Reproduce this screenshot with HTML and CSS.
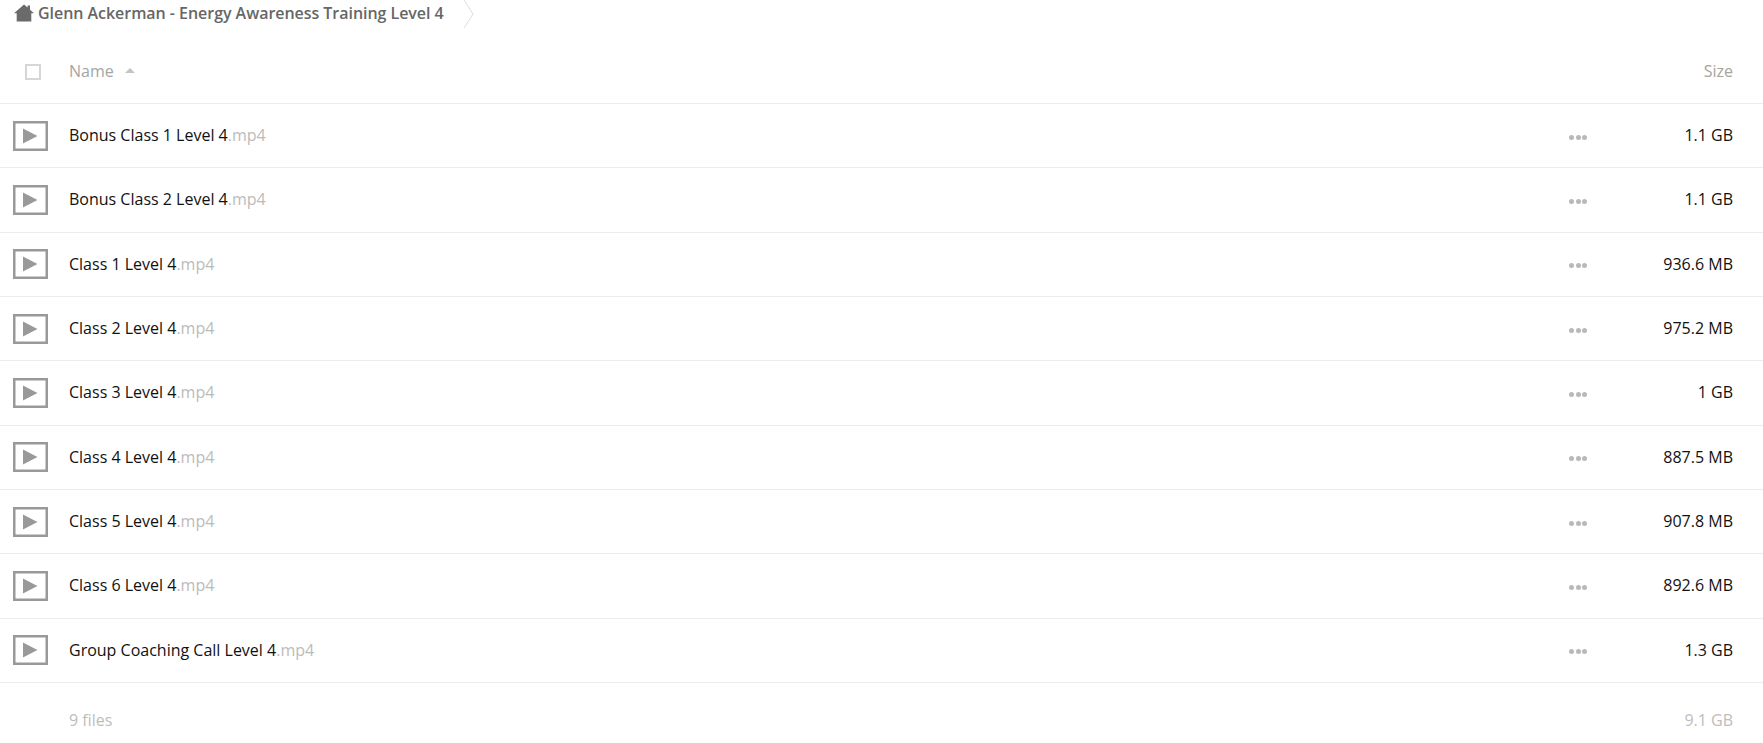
FILE: index.html
```html
<!DOCTYPE html>
<html lang="en">
<head>
<meta charset="utf-8">
<title>Glenn Ackerman - Energy Awareness Training Level 4</title>
<link rel="stylesheet" href="styles.css">
</head>
<body>
<nav class="crumb">
  <svg class="home" viewBox="0 0 20 18" width="20" height="18"><path d="M10 .5 13.6 3.6V1.5H16V5.700L20 9.200H17.300V17.500H2.700V9.200H0Z" fill="#6b6b6b"/></svg>
  <span class="crumb-text">Glenn Ackerman - Energy Awareness Training Level 4</span>
  <svg class="chev" viewBox="0 0 12 28" width="12" height="28"><path d="M1 0 10 14 1 28" fill="none" stroke="#dcdcdc"/></svg>
</nav>
<header class="head">
  <span class="check"></span>
  <span class="head-name">Name</span>
  <span class="sort"></span>
  <span class="head-size">Size</span>
</header>
<main>
  <div class="row"><svg class="vid" viewBox="0 0 35 30" width="35" height="30"><rect x="1.250" y="1.250" width="32.500" height="27.500" fill="none" stroke="#999" stroke-width="2.500"/><path d="M10 7.500 24.500 15 10 22.500Z" fill="#999"/></svg><span class="name">Bonus Class 1 Level 4<span class="ext">.mp4</span></span><span class="dots"><i></i><i></i><i></i></span><span class="size">1.1 GB</span></div>
  <div class="row"><svg class="vid" viewBox="0 0 35 30" width="35" height="30"><rect x="1.250" y="1.250" width="32.500" height="27.500" fill="none" stroke="#999" stroke-width="2.500"/><path d="M10 7.500 24.500 15 10 22.500Z" fill="#999"/></svg><span class="name">Bonus Class 2 Level 4<span class="ext">.mp4</span></span><span class="dots"><i></i><i></i><i></i></span><span class="size">1.1 GB</span></div>
  <div class="row"><svg class="vid" viewBox="0 0 35 30" width="35" height="30"><rect x="1.250" y="1.250" width="32.500" height="27.500" fill="none" stroke="#999" stroke-width="2.500"/><path d="M10 7.500 24.500 15 10 22.500Z" fill="#999"/></svg><span class="name">Class 1 Level 4<span class="ext">.mp4</span></span><span class="dots"><i></i><i></i><i></i></span><span class="size">936.6 MB</span></div>
  <div class="row"><svg class="vid" viewBox="0 0 35 30" width="35" height="30"><rect x="1.250" y="1.250" width="32.500" height="27.500" fill="none" stroke="#999" stroke-width="2.500"/><path d="M10 7.500 24.500 15 10 22.500Z" fill="#999"/></svg><span class="name">Class 2 Level 4<span class="ext">.mp4</span></span><span class="dots"><i></i><i></i><i></i></span><span class="size">975.2 MB</span></div>
  <div class="row"><svg class="vid" viewBox="0 0 35 30" width="35" height="30"><rect x="1.250" y="1.250" width="32.500" height="27.500" fill="none" stroke="#999" stroke-width="2.500"/><path d="M10 7.500 24.500 15 10 22.500Z" fill="#999"/></svg><span class="name">Class 3 Level 4<span class="ext">.mp4</span></span><span class="dots"><i></i><i></i><i></i></span><span class="size">1 GB</span></div>
  <div class="row"><svg class="vid" viewBox="0 0 35 30" width="35" height="30"><rect x="1.250" y="1.250" width="32.500" height="27.500" fill="none" stroke="#999" stroke-width="2.500"/><path d="M10 7.500 24.500 15 10 22.500Z" fill="#999"/></svg><span class="name">Class 4 Level 4<span class="ext">.mp4</span></span><span class="dots"><i></i><i></i><i></i></span><span class="size">887.5 MB</span></div>
  <div class="row"><svg class="vid" viewBox="0 0 35 30" width="35" height="30"><rect x="1.250" y="1.250" width="32.500" height="27.500" fill="none" stroke="#999" stroke-width="2.500"/><path d="M10 7.500 24.500 15 10 22.500Z" fill="#999"/></svg><span class="name">Class 5 Level 4<span class="ext">.mp4</span></span><span class="dots"><i></i><i></i><i></i></span><span class="size">907.8 MB</span></div>
  <div class="row"><svg class="vid" viewBox="0 0 35 30" width="35" height="30"><rect x="1.250" y="1.250" width="32.500" height="27.500" fill="none" stroke="#999" stroke-width="2.500"/><path d="M10 7.500 24.500 15 10 22.500Z" fill="#999"/></svg><span class="name">Class 6 Level 4<span class="ext">.mp4</span></span><span class="dots"><i></i><i></i><i></i></span><span class="size">892.6 MB</span></div>
  <div class="row"><svg class="vid" viewBox="0 0 35 30" width="35" height="30"><rect x="1.250" y="1.250" width="32.500" height="27.500" fill="none" stroke="#999" stroke-width="2.500"/><path d="M10 7.500 24.500 15 10 22.500Z" fill="#999"/></svg><span class="name">Group Coaching Call Level 4<span class="ext">.mp4</span></span><span class="dots"><i></i><i></i><i></i></span><span class="size">1.3 GB</span></div>
</main>
<footer class="foot">
  <span class="foot-count">9 files</span>
  <span class="foot-size">9.1 GB</span>
</footer>
</body>
</html>
```
FILE: styles.css
```css
html, body { margin: 0; padding: 0; background: #fff; overflow: hidden; }
body { font-family: "Open Sans", sans-serif; font-size: 16px; color: #111; height: 743px; }

.crumb { display: flex; align-items: center; height: 26px; padding-left: 14px; margin-bottom: 2px; }
.home { flex: none; }
.crumb-text { margin-left: 4px; font-size: 16px; font-weight: 600; color: #666; white-space: nowrap; letter-spacing: -0.04px; }
.chev { flex: none; margin-left: 19px; margin-top: 2px; }

.head { display: flex; align-items: center; border-bottom: 1px solid #ececec; padding: 10px 25px 0; box-sizing: border-box; height: 76px; }
.check { width: 12px; height: 12px; border: 2px solid #d6d6d6; flex: none; margin-top: 3px; }
.head-name { margin-left: 28px; color: #a5a5a5; }
.sort { margin-left: 11px; width: 0; height: 0; border-left: 5px solid transparent; border-right: 5px solid transparent; border-bottom: 5px solid #c4c4c4; }
.head-size { margin-left: auto; margin-right: 5px; color: #a5a59a; }

.row { display: flex; align-items: center; height: 64.33px; box-sizing: border-box; border-bottom: 1px solid #ececec; padding: 0 30px 0 13px; }
.vid { flex: none; }
.name { margin-left: 21px; white-space: nowrap; margin-top: -1px; }
.ext { color: #bbb; }
.dots { margin-left: auto; display: flex; gap: 1.5px; margin-top: 3px; }
.dots i { width: 5px; height: 5px; border-radius: 50%; background: #b9b9b9; }
.size { width: 146px; text-align: right; flex: none; margin-top: -1px; }

.foot { display: flex; justify-content: space-between; padding: 26px 30px 0 69px; color: #bdbdbd; }
```
